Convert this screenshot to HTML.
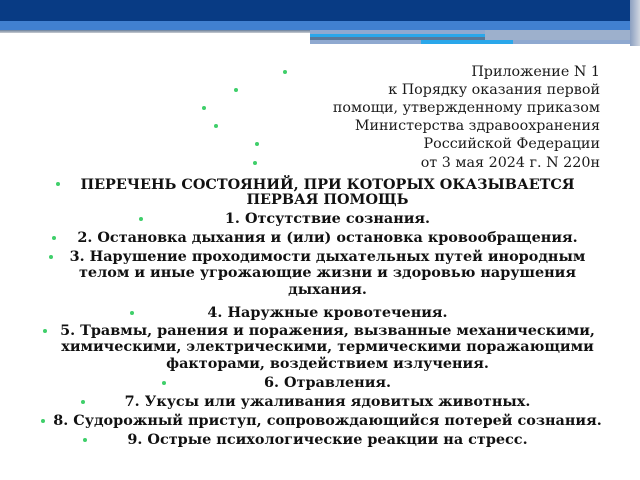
<!DOCTYPE html><html><head><meta charset="utf-8"><style>
body{margin:0;width:640px;height:480px;background:#fff;position:relative;overflow:hidden;font-family:"DejaVu Serif","Liberation Serif",serif;color:#111}
.a{position:absolute;white-space:nowrap;line-height:16px}
.r{right:40px;font-size:14.3px;text-align:right;color:#1a1a1a}
.c{left:0;width:655px;text-align:center;font-weight:bold;font-size:14.4px}
.b{position:absolute;width:4px;height:4px;border-radius:50%;background:#3fcf6a}
</style></head><body>
<div style="position:absolute;left:0;top:0;width:640px;height:21px;background:#083b84"></div>
<div style="position:absolute;left:0;top:21px;width:640px;height:9px;background:#4180d0"></div>
<div style="position:absolute;left:0;top:30px;width:310px;height:3px;background:linear-gradient(#6a7f9a,#c8ccd2)"></div>
<div style="position:absolute;left:310px;top:30px;width:320px;height:14px;background:#8fa9d0"></div>
<div style="position:absolute;left:310px;top:34px;width:175px;height:3px;background:#2aa7ea"></div>
<div style="position:absolute;left:310px;top:37px;width:175px;height:3px;background:#5a7898"></div>
<div style="position:absolute;left:485px;top:30px;width:145px;height:10px;background:#9db0cc"></div>
<div style="position:absolute;left:421px;top:40px;width:92px;height:4px;background:#2aa7ea"></div>
<div style="position:absolute;left:630px;top:0;width:10px;height:46px;background:linear-gradient(90deg,#8b9fc0,#d0d6e0)"></div>

<div class="a r" style="top:64px">Приложение N 1</div><div class="b" style="left:283px;top:70px"></div>
<div class="a r" style="top:82px">к Порядку оказания первой</div><div class="b" style="left:234px;top:88px"></div>
<div class="a r" style="top:100px">помощи, утвержденному приказом</div><div class="b" style="left:202px;top:106px"></div>
<div class="a r" style="top:118px">Министерства здравоохранения</div><div class="b" style="left:214px;top:124px"></div>
<div class="a r" style="top:136px">Российской Федерации</div><div class="b" style="left:255px;top:142px"></div>
<div class="a r" style="top:155px">от 3 мая 2024 г. N 220н</div><div class="b" style="left:253px;top:161px"></div>

<div class="a c" style="top:177px">ПЕРЕЧЕНЬ СОСТОЯНИЙ, ПРИ КОТОРЫХ ОКАЗЫВАЕТСЯ</div><div class="b" style="left:56px;top:182px"></div>
<div class="a c" style="top:192px">ПЕРВАЯ ПОМОЩЬ</div>
<div class="a c" style="top:211px">1. Отсутствие сознания.</div><div class="b" style="left:139px;top:217px"></div>
<div class="a c" style="top:230px">2. Остановка дыхания и (или) остановка кровообращения.</div><div class="b" style="left:52px;top:236px"></div>
<div class="a c" style="top:249px">3. Нарушение проходимости дыхательных путей инородным</div><div class="b" style="left:49px;top:255px"></div>
<div class="a c" style="top:265px">телом и иные угрожающие жизни и здоровью нарушения</div>
<div class="a c" style="top:282px">дыхания.</div>
<div class="a c" style="top:305px">4. Наружные кровотечения.</div><div class="b" style="left:130px;top:311px"></div>
<div class="a c" style="top:323px">5. Травмы, ранения и поражения, вызванные механическими,</div><div class="b" style="left:43px;top:329px"></div>
<div class="a c" style="top:339px">химическими, электрическими, термическими поражающими</div>
<div class="a c" style="top:356px">факторами, воздействием излучения.</div>
<div class="a c" style="top:375px">6. Отравления.</div><div class="b" style="left:162px;top:381px"></div>
<div class="a c" style="top:394px">7. Укусы или ужаливания ядовитых животных.</div><div class="b" style="left:81px;top:400px"></div>
<div class="a c" style="top:413px">8. Судорожный приступ, сопровождающийся потерей сознания.</div><div class="b" style="left:41px;top:419px"></div>
<div class="a c" style="top:432px">9. Острые психологические реакции на стресс.</div><div class="b" style="left:83px;top:438px"></div>
</body></html>
